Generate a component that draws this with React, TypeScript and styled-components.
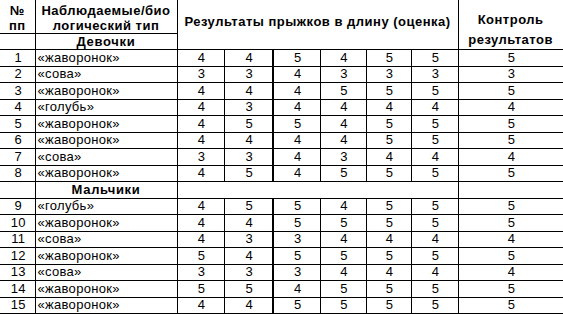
import React from 'react';
import styled, { createGlobalStyle } from 'styled-components';

const GlobalStyle = createGlobalStyle`
  html, body {
    margin: 0;
    padding: 0;
    background: #fff;
  }
  body {
    font-family: 'Liberation Sans', Arial, sans-serif;
    color: #000;
  }
`;

const Table = styled.table`
  border-collapse: collapse;
  table-layout: fixed;
  width: 563px;
  font-size: 13px;
`;

const HeadCell = styled.th<{ $noLeft?: boolean; $h?: number }>`
  font-weight: bold;
  text-align: center;
  vertical-align: top;
  padding: 0;
  border: 1px solid #000;
  border-top: none;
  border-left: ${(p) => (p.$noLeft ? 'none' : '1px solid #000')};
  height: ${(p) => (p.$h ? `${p.$h}px` : 'auto')};
  line-height: 15px;
  letter-spacing: 0.5px;
`;

const Cell = styled.td<{ $noLeft?: boolean; $thickLeft?: boolean; $align?: string }>`
  padding: 0 0 0 2px;
  height: 15.5px;
  line-height: 14px;
  text-align: ${(p) => p.$align || 'center'};
  border: 1px solid #000;
  border-left: ${(p) =>
    p.$noLeft ? 'none' : p.$thickLeft ? '2px solid #000' : '1px solid #000'};
  letter-spacing: 0.3px;
  white-space: nowrap;
`;

const GroupCell = styled.td`
  padding: 0;
  text-align: center;
  font-weight: bold;
  letter-spacing: 0.7px;
  border: 1px solid #000;
  line-height: 14px;
`;

const EmptyCell = styled.td<{ $noLeft?: boolean; $h?: number }>`
  padding: 0;
  height: ${(p) => (p.$h ? `${p.$h}px` : '15.5px')};
  border: 1px solid #000;
  border-left: ${(p) => (p.$noLeft ? 'none' : '1px solid #000')};
`;

const Line = styled.div<{ $mt?: number }>`
  margin-top: ${(p) => p.$mt || 0}px;
`;

const colWidths = [35, 142, 47, 49, 47, 46, 45, 47, 105];

type Row = { n: number; type: string; marks: number[]; ctrl: number };

const girls: Row[] = [
  { n: 1, type: '«жаворонок»', marks: [4, 4, 5, 4, 5, 5], ctrl: 5 },
  { n: 2, type: '«сова»', marks: [3, 3, 4, 3, 3, 3], ctrl: 3 },
  { n: 3, type: '«жаворонок»', marks: [4, 4, 4, 5, 5, 5], ctrl: 5 },
  { n: 4, type: '«голубь»', marks: [4, 3, 4, 4, 4, 4], ctrl: 4 },
  { n: 5, type: '«жаворонок»', marks: [4, 5, 5, 4, 5, 5], ctrl: 5 },
  { n: 6, type: '«жаворонок»', marks: [4, 4, 4, 4, 5, 5], ctrl: 5 },
  { n: 7, type: '«сова»', marks: [3, 3, 4, 3, 4, 4], ctrl: 4 },
  { n: 8, type: '«жаворонок»', marks: [4, 5, 4, 5, 5, 5], ctrl: 5 },
];

const boys: Row[] = [
  { n: 9, type: '«голубь»', marks: [4, 5, 5, 4, 5, 5], ctrl: 5 },
  { n: 10, type: '«жаворонок»', marks: [4, 4, 5, 5, 5, 5], ctrl: 5 },
  { n: 11, type: '«сова»', marks: [4, 3, 3, 4, 4, 4], ctrl: 4 },
  { n: 12, type: '«жаворонок»', marks: [5, 4, 5, 5, 5, 5], ctrl: 5 },
  { n: 13, type: '«сова»', marks: [3, 3, 3, 4, 4, 4], ctrl: 4 },
  { n: 14, type: '«жаворонок»', marks: [5, 5, 4, 5, 5, 5], ctrl: 5 },
  { n: 15, type: '«жаворонок»', marks: [4, 4, 5, 5, 5, 5], ctrl: 5 },
];

const DataRow = ({ row }: { row: Row }) => (
  <tr>
    <Cell $noLeft>{row.n}</Cell>
    <Cell $align="left">{row.type}</Cell>
    {row.marks.map((m, i) => (
      <Cell key={i} $thickLeft={i === 2}>
        {m}
      </Cell>
    ))}
    <Cell>{row.ctrl}</Cell>
  </tr>
);

const App = () => {
  return (
    <>
      <GlobalStyle />
      <Table>
        <colgroup>
          {colWidths.map((w, i) => (
            <col key={i} style={{ width: w }} />
          ))}
        </colgroup>
        <thead>
          <tr>
            <HeadCell $noLeft $h={32}>
              <Line $mt={3}>№</Line>
              <Line>пп</Line>
            </HeadCell>
            <HeadCell>
              <Line $mt={3}>Наблюдаемые/био</Line>
              <Line>логический тип</Line>
            </HeadCell>
            <HeadCell colSpan={6} rowSpan={2}>
              <Line $mt={14}>Результаты прыжков в длину (оценка)</Line>
            </HeadCell>
            <HeadCell rowSpan={2}>
              <Line $mt={12}>Контроль</Line>
              <Line $mt={5}>результатов</Line>
            </HeadCell>
          </tr>
          <tr>
            <EmptyCell $noLeft $h={15} />
            <GroupCell>Девочки</GroupCell>
          </tr>
        </thead>
        <tbody>
          {girls.map((r) => (
            <DataRow key={r.n} row={r} />
          ))}
          <tr>
            <EmptyCell $noLeft />
            <GroupCell>Мальчики</GroupCell>
            <EmptyCell colSpan={6} />
            <EmptyCell />
          </tr>
          {boys.map((r) => (
            <DataRow key={r.n} row={r} />
          ))}
        </tbody>
      </Table>
    </>
  );
};

export default App;
